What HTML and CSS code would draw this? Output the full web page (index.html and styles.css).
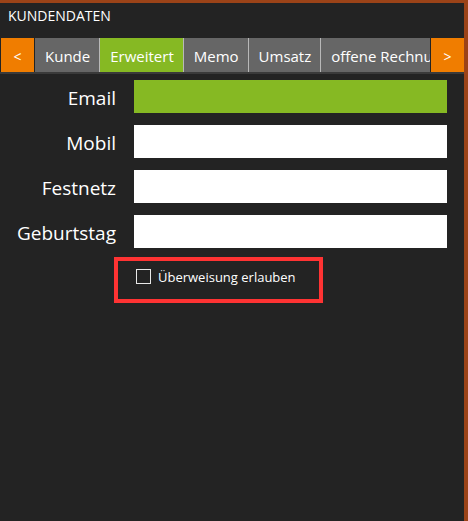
FILE: index.html
```html
<!DOCTYPE html>
<html lang="de">
<head>
<meta charset="utf-8">
<title>Kundendaten</title>
<link rel="stylesheet" href="styles.css">
</head>
<body>
<div class="panel">
  <div class="title">KUNDENDATEN</div>
  <div class="tabbar">
    <button class="nav">&lt;</button>
    <div class="tabs">
      <div class="tab">Kunde</div>
      <div class="tab active">Erweitert</div>
      <div class="tab">Memo</div>
      <div class="tab">Umsatz</div>
      <div class="tab">offene Rechnungen</div>
    </div>
    <button class="nav">&gt;</button>
  </div>
  <div class="form">
    <label class="lbl">Email</label><div class="field green"></div>
    <label class="lbl">Mobil</label><div class="field"></div>
    <label class="lbl">Festnetz</label><div class="field"></div>
    <label class="lbl">Geburtstag</label><div class="field"></div>
  </div>
  <div class="check-row">
    <div class="highlight">
      <span class="box"></span>
      <span class="check-label">Überweisung erlauben</span>
    </div>
  </div>
</div>
</body>
</html>
```

FILE: styles.css
```css
* { box-sizing: border-box; }
html, body { margin: 0; height: 100%; }
body {
  background: #232323;
  font-family: "Open Sans", "Noto Sans", sans-serif;
  color: #ffffff;
}
.panel {
  height: 521px;
  border-top: 3px solid #9b4318;
  border-right: 4px solid #9b4318;
  overflow: hidden;
}
.title {
  font-size: 14px;
  line-height: 18px;
  padding: 4px 0 0 8px;
  height: 35px;
}
.tabbar {
  display: flex;
  height: 36px;
  border-bottom: 2px solid #3a3a3a;
  padding-left: 1px;
}
.nav {
  flex: 0 0 33px;
  border: none;
  background: #f07d00;
  color: #ffffff;
  font-family: inherit;
  font-size: 14px;
  padding: 2px 0 0;
}
.tabs {
  flex: 1;
  display: flex;
  overflow: hidden;
  margin: 0 1px;
}
.tab {
  flex: 0 0 auto;
  background: #666666;
  font-size: 15px;
  line-height: 31px;
  padding: 3px 9px 0 10px;
  border-left: 1px solid #b8b8b8;
  white-space: nowrap;
}
.tab:first-child { border-left: none; }
.tab.active { background: #86b923; }
.form {
  display: grid;
  grid-template-columns: 116px 313px;
  grid-auto-rows: 33px;
  column-gap: 18px;
  row-gap: 12px;
  margin-top: 6px;
}
.lbl {
  font-size: 19px;
  text-align: right;
  line-height: 33px;
  padding-top: 2px;
}
.field { background: #ffffff; }
.field.green { background: #86b923; }
.check-row {
  padding: 9px 0 0 114px;
}
.highlight {
  width: 209px;
  height: 46px;
  border: 4px solid #ff3333;
  display: flex;
  align-items: flex-start;
  padding: 8px 0 0 18px;
  gap: 7px;
}
.box {
  width: 15px;
  height: 15px;
  border: 1px solid #e8e8e8;
  flex: 0 0 auto;
}
.check-label {
  font-size: 13px;
  line-height: 16px;
}
```
